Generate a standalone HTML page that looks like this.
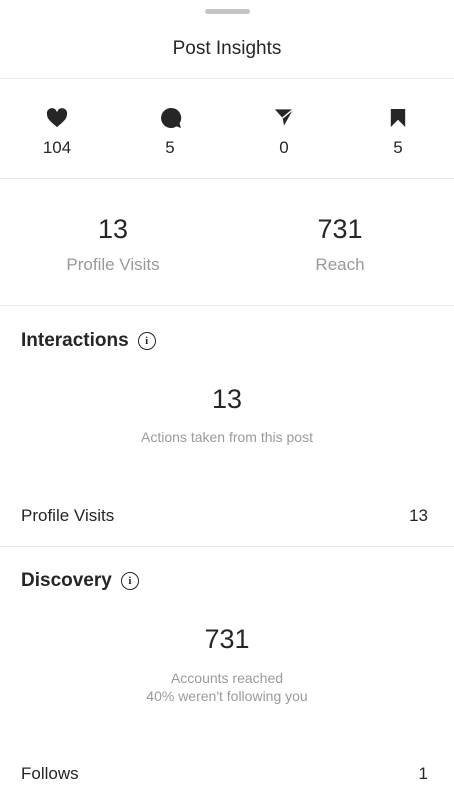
<!DOCTYPE html>
<html><head><meta charset="utf-8"><style>
*{margin:0;padding:0;box-sizing:border-box}
body{width:454px;height:800px;background:#fff;font-family:"Liberation Sans",Roboto,sans-serif;color:#262626;position:relative;overflow:hidden}
.a{position:absolute;white-space:nowrap}
.c{transform:translateX(-50%);text-align:center}
.hr{position:absolute;left:0;width:454px;height:1px;background:#ebebeb}
.g{color:#9a9a9a}
.h{font-size:19px;font-weight:bold}
.info{display:inline-block;width:18px;height:18px;border:1.3px solid #262626;border-radius:50%;font:bold 11px "Liberation Serif",serif;text-align:center;line-height:16px;vertical-align:2px;margin-left:9px}
</style></head><body>
<div class="a" style="left:205px;top:9px;width:45px;height:5px;border-radius:3px;background:#c4c4c4"></div>
<div class="a c" style="left:227px;top:38px;font-size:19px">Post Insights</div>
<div class="hr" style="top:78px"></div>

<svg class="a" style="left:46px;top:108px" width="22" height="20" viewBox="0 0 24 22"><path d="M12 21 C5 15 1 12 1 7 A5.5 5.5 0 0 1 12 4.5 A5.5 5.5 0 0 1 23 7 C23 12 19 15 12 21Z" fill="#262626"/></svg>
<svg class="a" style="left:160px;top:107px" width="22" height="22" viewBox="0 0 22 22"><path d="M11 1a10 10 0 1 0 5.5 18.4L21 21l-1.4-4.6A10 10 0 0 0 11 1z" fill="#262626"/></svg>
<svg class="a" style="left:274px;top:108px" width="20" height="19" viewBox="0 0 22 20"><path d="M1 1H21L11 19 9.5 10.5Z" fill="#262626"/><path d="M9.5 10.5 21 1" stroke="#fff" stroke-width="1.5"/></svg>
<svg class="a" style="left:389px;top:107px" width="18" height="22" viewBox="0 0 20 22"><path d="M2 1H18V21L10 13 2 21Z" fill="#262626"/></svg>
<div class="a c" style="left:57px;top:138px;font-size:17px">104</div>
<div class="a c" style="left:170px;top:138px;font-size:17px">5</div>
<div class="a c" style="left:284px;top:138px;font-size:17px">0</div>
<div class="a c" style="left:398px;top:138px;font-size:17px">5</div>
<div class="hr" style="top:178px"></div>

<div class="a c" style="left:113px;top:214px;font-size:27px">13</div>
<div class="a c" style="left:340px;top:214px;font-size:27px">731</div>
<div class="a c g" style="left:113px;top:255px;font-size:17px">Profile Visits</div>
<div class="a c g" style="left:340px;top:255px;font-size:17px">Reach</div>
<div class="hr" style="top:305px"></div>

<div class="a h" style="left:21px;top:330px">Interactions<span class="info">i</span></div>
<div class="a c" style="left:227px;top:384px;font-size:27px">13</div>
<div class="a c g" style="left:227px;top:429px;font-size:14px">Actions taken from this post</div>
<div class="a" style="left:21px;top:506px;font-size:17px">Profile Visits</div>
<div class="a" style="right:26px;top:506px;font-size:17px">13</div>
<div class="hr" style="top:546px"></div>

<div class="a h" style="left:21px;top:570px">Discovery<span class="info">i</span></div>
<div class="a c" style="left:227px;top:624px;font-size:27px">731</div>
<div class="a c g" style="left:227px;top:669px;font-size:14px;line-height:18px">Accounts reached<br>40% weren't following you</div>
<div class="a" style="left:21px;top:764px;font-size:17px">Follows</div>
<div class="a" style="right:26px;top:764px;font-size:17px">1</div>
</body></html>
